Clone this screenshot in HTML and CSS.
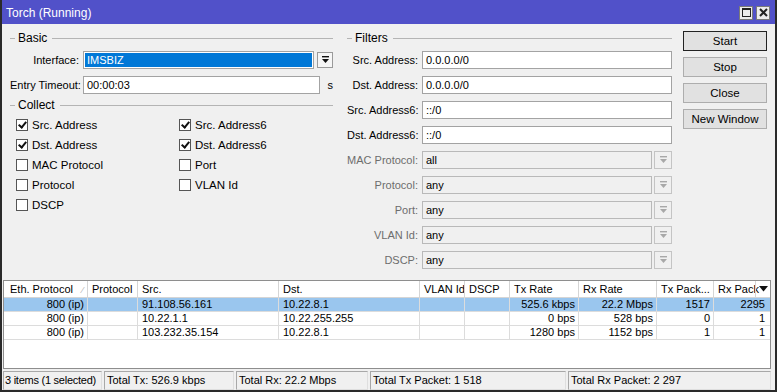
FILE: index.html
```html
<!DOCTYPE html>
<html lang="en">
<head>
    <meta charset="utf-8">
    <title>Torch (Running)</title>
    <link rel="stylesheet" href="styles.css">
</head>
<body>
<div class="window">

    <div class="titlebar">
        <span class="title">Torch (Running)</span>
        <div class="wbtns">
            <span class="wbtn"><svg width="11" height="11" viewBox="0 0 11 11"><rect x="1.5" y="1.5" width="8" height="8" fill="none" stroke="#222" stroke-width="1"/><rect x="1" y="1" width="9" height="2" fill="#222"/></svg></span>
            <span class="wbtn"><svg width="11" height="11" viewBox="0 0 11 11"><path d="M2 2 L9 9 M9 2 L2 9" stroke="#222" stroke-width="2"/></svg></span>
        </div>
    </div>

    <div class="main">
        <!-- colonne de gauche -->
        <div class="col-left">
            <div class="group"><span>Basic</span></div>
            <div class="row">
                <span class="lbl">Interface:</span>
                <div class="field field-iface"><span class="selected">IMSBIZ</span></div>
                <span class="dd"><svg width="9" height="9" viewBox="0 0 9 9"><rect x="1" y="1" width="7" height="1.4" fill="#111"/><path d="M1 4 H8 L4.5 8 Z" fill="#111"/></svg></span>
            </div>
            <div class="row">
                <span class="lbl">Entry Timeout:</span>
                <div class="field field-timeout">00:00:03</div>
                <span class="unit">s</span>
            </div>
            <div class="group"><span>Collect</span></div>
            <div class="checks">
                <div class="chk"><span class="box on"></span>Src. Address</div>
                <div class="chk"><span class="box on"></span>Src. Address6</div>
                <div class="chk"><span class="box on"></span>Dst. Address</div>
                <div class="chk"><span class="box on"></span>Dst. Address6</div>
                <div class="chk"><span class="box"></span>MAC Protocol</div>
                <div class="chk"><span class="box"></span>Port</div>
                <div class="chk"><span class="box"></span>Protocol</div>
                <div class="chk"><span class="box"></span>VLAN Id</div>
                <div class="chk"><span class="box"></span>DSCP</div>
            </div>
        </div>

        <!-- filtres -->
        <div class="col-filters">
            <div class="group"><span>Filters</span></div>
            <div class="row"><span class="lbl lbl-f">Src. Address:</span><div class="field field-f">0.0.0.0/0</div></div>
            <div class="row"><span class="lbl lbl-f">Dst. Address:</span><div class="field field-f">0.0.0.0/0</div></div>
            <div class="row"><span class="lbl lbl-f">Src. Address6:</span><div class="field field-f">::/0</div></div>
            <div class="row"><span class="lbl lbl-f">Dst. Address6:</span><div class="field field-f">::/0</div></div>
            <div class="row off"><span class="lbl lbl-f">MAC Protocol:</span><div class="field field-off">all</div><span class="dd dd-off"><svg width="9" height="9" viewBox="0 0 9 9"><rect x="1" y="1" width="7" height="1.4" fill="#a8a8a8"/><path d="M1 4 H8 L4.5 8 Z" fill="#a8a8a8"/></svg></span></div>
            <div class="row off"><span class="lbl lbl-f">Protocol:</span><div class="field field-off">any</div><span class="dd dd-off"><svg width="9" height="9" viewBox="0 0 9 9"><rect x="1" y="1" width="7" height="1.4" fill="#a8a8a8"/><path d="M1 4 H8 L4.5 8 Z" fill="#a8a8a8"/></svg></span></div>
            <div class="row off"><span class="lbl lbl-f">Port:</span><div class="field field-off">any</div><span class="dd dd-off"><svg width="9" height="9" viewBox="0 0 9 9"><rect x="1" y="1" width="7" height="1.4" fill="#a8a8a8"/><path d="M1 4 H8 L4.5 8 Z" fill="#a8a8a8"/></svg></span></div>
            <div class="row off"><span class="lbl lbl-f">VLAN Id:</span><div class="field field-off">any</div><span class="dd dd-off"><svg width="9" height="9" viewBox="0 0 9 9"><rect x="1" y="1" width="7" height="1.4" fill="#a8a8a8"/><path d="M1 4 H8 L4.5 8 Z" fill="#a8a8a8"/></svg></span></div>
            <div class="row off"><span class="lbl lbl-f">DSCP:</span><div class="field field-off">any</div><span class="dd dd-off"><svg width="9" height="9" viewBox="0 0 9 9"><rect x="1" y="1" width="7" height="1.4" fill="#a8a8a8"/><path d="M1 4 H8 L4.5 8 Z" fill="#a8a8a8"/></svg></span></div>
        </div>

        <!-- boutons -->
        <div class="buttons">
            <button class="btn btn-default">Start</button>
            <button class="btn">Stop</button>
            <button class="btn">Close</button>
            <button class="btn">New Window</button>
        </div>
    </div>

    <!-- liste -->
    <div class="list">
        <div class="grid head">
            <div class="c">Eth. Protocol<span class="sort">&#8260;</span></div>
            <div class="c">Protocol</div>
            <div class="c">Src.</div>
            <div class="c">Dst.</div>
            <div class="c">VLAN Id</div>
            <div class="c">DSCP</div>
            <div class="c">Tx Rate</div>
            <div class="c">Rx Rate</div>
            <div class="c">Tx Pack...</div>
            <div class="c c-last">Rx Pack<span class="menu"><svg width="9" height="6" viewBox="0 0 9 6"><path d="M0 0 H9 L4.5 5.5 Z" fill="#111"/></svg></span></div>
        </div>
        <div class="grid line sel">
            <div class="c r">800 (ip)</div><div class="c"></div><div class="c">91.108.56.161</div><div class="c">10.22.8.1</div>
            <div class="c"></div><div class="c"></div><div class="c r">525.6 kbps</div><div class="c r">22.2 Mbps</div><div class="c r">1517</div><div class="c r c-last">2295</div>
        </div>
        <div class="grid line">
            <div class="c r">800 (ip)</div><div class="c"></div><div class="c">10.22.1.1</div><div class="c">10.22.255.255</div>
            <div class="c"></div><div class="c"></div><div class="c r">0 bps</div><div class="c r">528 bps</div><div class="c r">0</div><div class="c r c-last">1</div>
        </div>
        <div class="grid line">
            <div class="c r">800 (ip)</div><div class="c"></div><div class="c">103.232.35.154</div><div class="c">10.22.8.1</div>
            <div class="c"></div><div class="c"></div><div class="c r">1280 bps</div><div class="c r">1152 bps</div><div class="c r">1</div><div class="c r c-last">1</div>
        </div>
    </div>

    <div class="status">
        <span class="cell w1">3 items (1 selected)</span>
        <span class="cell w2">Total Tx: 526.9 kbps</span>
        <span class="cell w3">Total Rx: 22.2 Mbps</span>
        <span class="cell w4">Total Tx Packet: 1 518</span>
        <span class="cell w5">Total Rx Packet: 2 297</span>
    </div>

</div>
</body>
</html>
```

FILE: styles.css
```css
* {
    box-sizing: border-box;
}

body {
    margin: 0;
    padding: 0;
    background-color: #f0f0f0;
    font-family: "Liberation Sans", Arial, sans-serif;
    font-size: 11px;
    color: #000;
}

.window {
    width: 777px;
    height: 392px;
    display: flex;
    flex-direction: column;
    background-color: #f0f0f0;
    border-left: 2px solid #2a2a2a;
    border-right: 2px solid #2a2a2a;
    border-bottom: 2px solid #2a2a2a;
}

/* barre de titre */
.titlebar {
    height: 24px;
    background-color: #5151c9;
    display: flex;
    align-items: center;
    justify-content: space-between;
    padding: 1px 5px 0 4px;
}

.title {
    color: #fff;
    font-size: 12px;
}

.wbtns {
    display: flex;
    gap: 3px;
}

.wbtn {
    width: 14px;
    height: 14px;
    background-color: #ececec;
    border: 1px solid #7a7a7a;
    display: flex;
    align-items: center;
    justify-content: center;
}

/* zone principale */
.main {
    height: 256px;
    display: flex;
    padding: 6px 0 0 8px;
}

.col-left {
    width: 323px;
}

.col-filters {
    width: 325px;
    margin-left: 14px;
}

.group {
    height: 16px;
    display: flex;
    align-items: center;
}

.group::before {
    content: "";
    width: 5px;
    border-top: 1px solid #b4b4b4;
    margin-right: 3px;
}

.group::after {
    content: "";
    flex: 1;
    border-top: 1px solid #b4b4b4;
    margin-left: 5px;
}

.group span {
    font-size: 12px;
}

.row {
    height: 25px;
    display: flex;
    align-items: center;
}

.group + .row {
    margin-top: 1px;
}

.lbl {
    width: 69px;
    text-align: right;
    white-space: nowrap;
    margin-right: 4px;
}

.lbl-f {
    width: 71px;
}

.off .lbl {
    color: #6d6d6d;
}

.field {
    height: 18px;
    background-color: #fff;
    border: 1px solid #a3a3a3;
    padding: 0 3px;
    line-height: 16px;
    white-space: nowrap;
}

.field-iface {
    width: 231px;
    padding: 1px;
}

.field-iface .selected {
    display: block;
    height: 14px;
    line-height: 14px;
    background-color: #0078d7;
    color: #fff;
    padding-left: 2px;
}

.field-timeout {
    width: 238px;
}

.unit {
    margin-left: 8px;
}

.field-f {
    width: 250px;
}

.field-off {
    width: 230px;
    background-color: #f0f0f0;
    border-color: #b9b9b9;
}

.dd {
    width: 16px;
    height: 16px;
    margin-left: 3px;
    background-color: #f6f6f6;
    border: 1px solid #9a9a9a;
    display: flex;
    align-items: center;
    justify-content: center;
}

.dd-off {
    width: 18px;
    height: 18px;
    margin-left: 2px;
    background-color: #f0f0f0;
    border-color: #c4c4c4;
}

/* cases a cocher */
.checks {
    margin-top: 2px;
    padding-left: 6px;
    display: grid;
    grid-template-columns: 163px 1fr;
}

.chk {
    height: 20px;
    display: flex;
    align-items: center;
    font-size: 11.5px;
}

.box {
    width: 12px;
    height: 12px;
    border: 1px solid #555;
    background-color: #fff;
    margin-right: 4px;
    position: relative;
}

.box.on::after {
    content: "";
    position: absolute;
    left: 3px;
    top: 0px;
    width: 3px;
    height: 6px;
    border-right: 2px solid #111;
    border-bottom: 2px solid #111;
    transform: rotate(40deg);
}

/* boutons */
.buttons {
    margin-left: 11px;
    margin-top: 1px;
    width: 84px;
    display: flex;
    flex-direction: column;
    gap: 6px;
}

.btn {
    height: 20px;
    width: 84px;
    background-color: #e1e1e1;
    border: 1px solid #adadad;
    font-family: "Liberation Sans", Arial, sans-serif;
    font-size: 11.5px;
    padding: 0;
}

.btn-default {
    border-color: #222;
}

/* liste */
.list {
    height: 89px;
    margin: 0 4px 0 1px;
    background-color: #fff;
    border: 1px solid #8e8e8e;
}

.grid {
    display: grid;
    grid-template-columns: 84px 50px 141px 141px 45px 45px 69px 78px 57px 56px;
}

.head {
    height: 17px;
    border-bottom: 1px solid #d5d5d5;
}

.head .c {
    border-right: 1px solid #d5d5d5;
    line-height: 16px;
}

.head .c:first-child {
    padding-left: 6px;
}

.sort {
    color: #b0b0b0;
    font-size: 9px;
    margin-left: 9px;
}

.c {
    padding: 0 3px 0 4px;
    white-space: nowrap;
    overflow: hidden;
}

.line {
    height: 14px;
    border-bottom: 1px solid #dcdcdc;
}

.line .c {
    border-right: 1px solid #dcdcdc;
    line-height: 13px;
}

.line .c-last,
.head .c-last {
    border-right: none;
}

.c-last {
    position: relative;
}

.menu {
    position: absolute;
    right: 0;
    top: 0;
    width: 15px;
    height: 16px;
    border-left: 1px solid #d5d5d5;
    display: flex;
    align-items: center;
    justify-content: center;
}

.r {
    text-align: right;
}

.line .c-last {
    padding-right: 5px;
}

.sel {
    background-color: #9ac6ee;
}

/* barre d'etat */
.status {
    height: 19px;
    margin: 2px 4px 0 1px;
    display: flex;
    gap: 2px;
}

.cell {
    height: 19px;
    line-height: 17px;
    padding-left: 2px;
    border: 1px solid #a8a8a8;
    border-right-color: #dedede;
    border-bottom-color: #dedede;
    white-space: nowrap;
    overflow: hidden;
    font-size: 11px;
}

.w1 {
    width: 99px;
    padding-left: 1px;
    letter-spacing: -0.25px;
}
.w2 { width: 130px; }
.w3 { width: 132px; }
.w4 { width: 196px; }
.w5 { flex: 1; }
```
